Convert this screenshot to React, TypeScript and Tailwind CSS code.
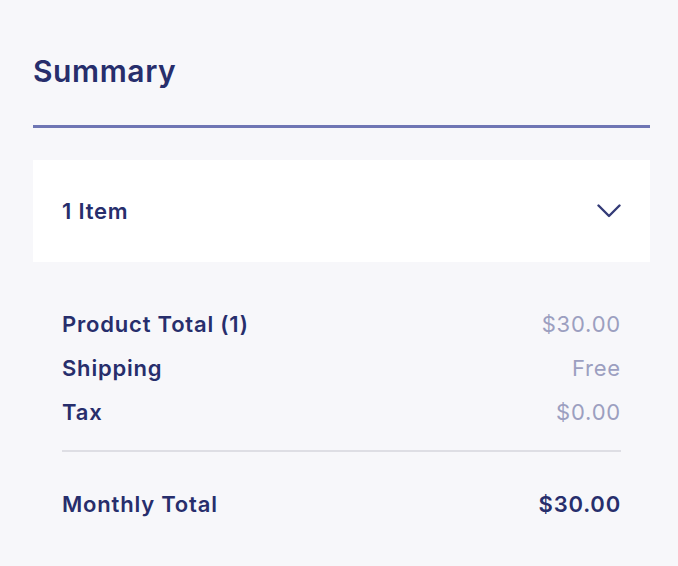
const rows = [
  { label: 'Product Total (1)', value: '$30.00' },
  { label: 'Shipping', value: 'Free' },
  { label: 'Tax', value: '$0.00' },
]

export default function App() {
  return (
    <div
      className="h-[566px] w-full bg-[#f7f7fa] pl-[33px] pr-[28px] pt-[50px] text-[#272e6c]"
      style={{ fontFamily: 'Inter, "Noto Sans", sans-serif' }}
    >
      <h2 className="h-[42px] text-[30px] font-semibold leading-[42px] tracking-[0.6px]">Summary</h2>
      <div className="mt-[33px] h-[3px] w-full bg-[#6f76b4]" />

      {/* item accordion */}
      <div className="mt-[32px] flex h-[102px] items-center justify-between bg-white pl-[29px] pr-[29px]">
        <span className="text-[22px] font-semibold tracking-[0.8px]">1 Item</span>
        <svg width="24" height="14" viewBox="0 0 24 14" fill="none" className="text-[#343b77]">
          <polyline points="1.5,1.5 12,12 22.5,1.5" stroke="currentColor" strokeWidth="2.4" strokeLinecap="round" strokeLinejoin="round" />
        </svg>
      </div>

      <div className="px-[29px] pt-[48px]">
        <div className="flex flex-col gap-[16px]">
          {rows.map((row) => (
            <div key={row.label} className="flex h-[28px] items-center justify-between text-[22px] leading-[28px] tracking-[0.8px]">
              <span className="font-semibold">{row.label}</span>
              <span className="text-[#9c9fc0]">{row.value}</span>
            </div>
          ))}
        </div>
        <div className="mt-[24px] h-[2px] w-full bg-[#dedee4]" />
        <div className="mt-[38px] flex h-[28px] items-center justify-between text-[22px] font-semibold leading-[28px] tracking-[0.8px]">
          <span>Monthly Total</span>
          <span>$30.00</span>
        </div>
      </div>
    </div>
  )
}
